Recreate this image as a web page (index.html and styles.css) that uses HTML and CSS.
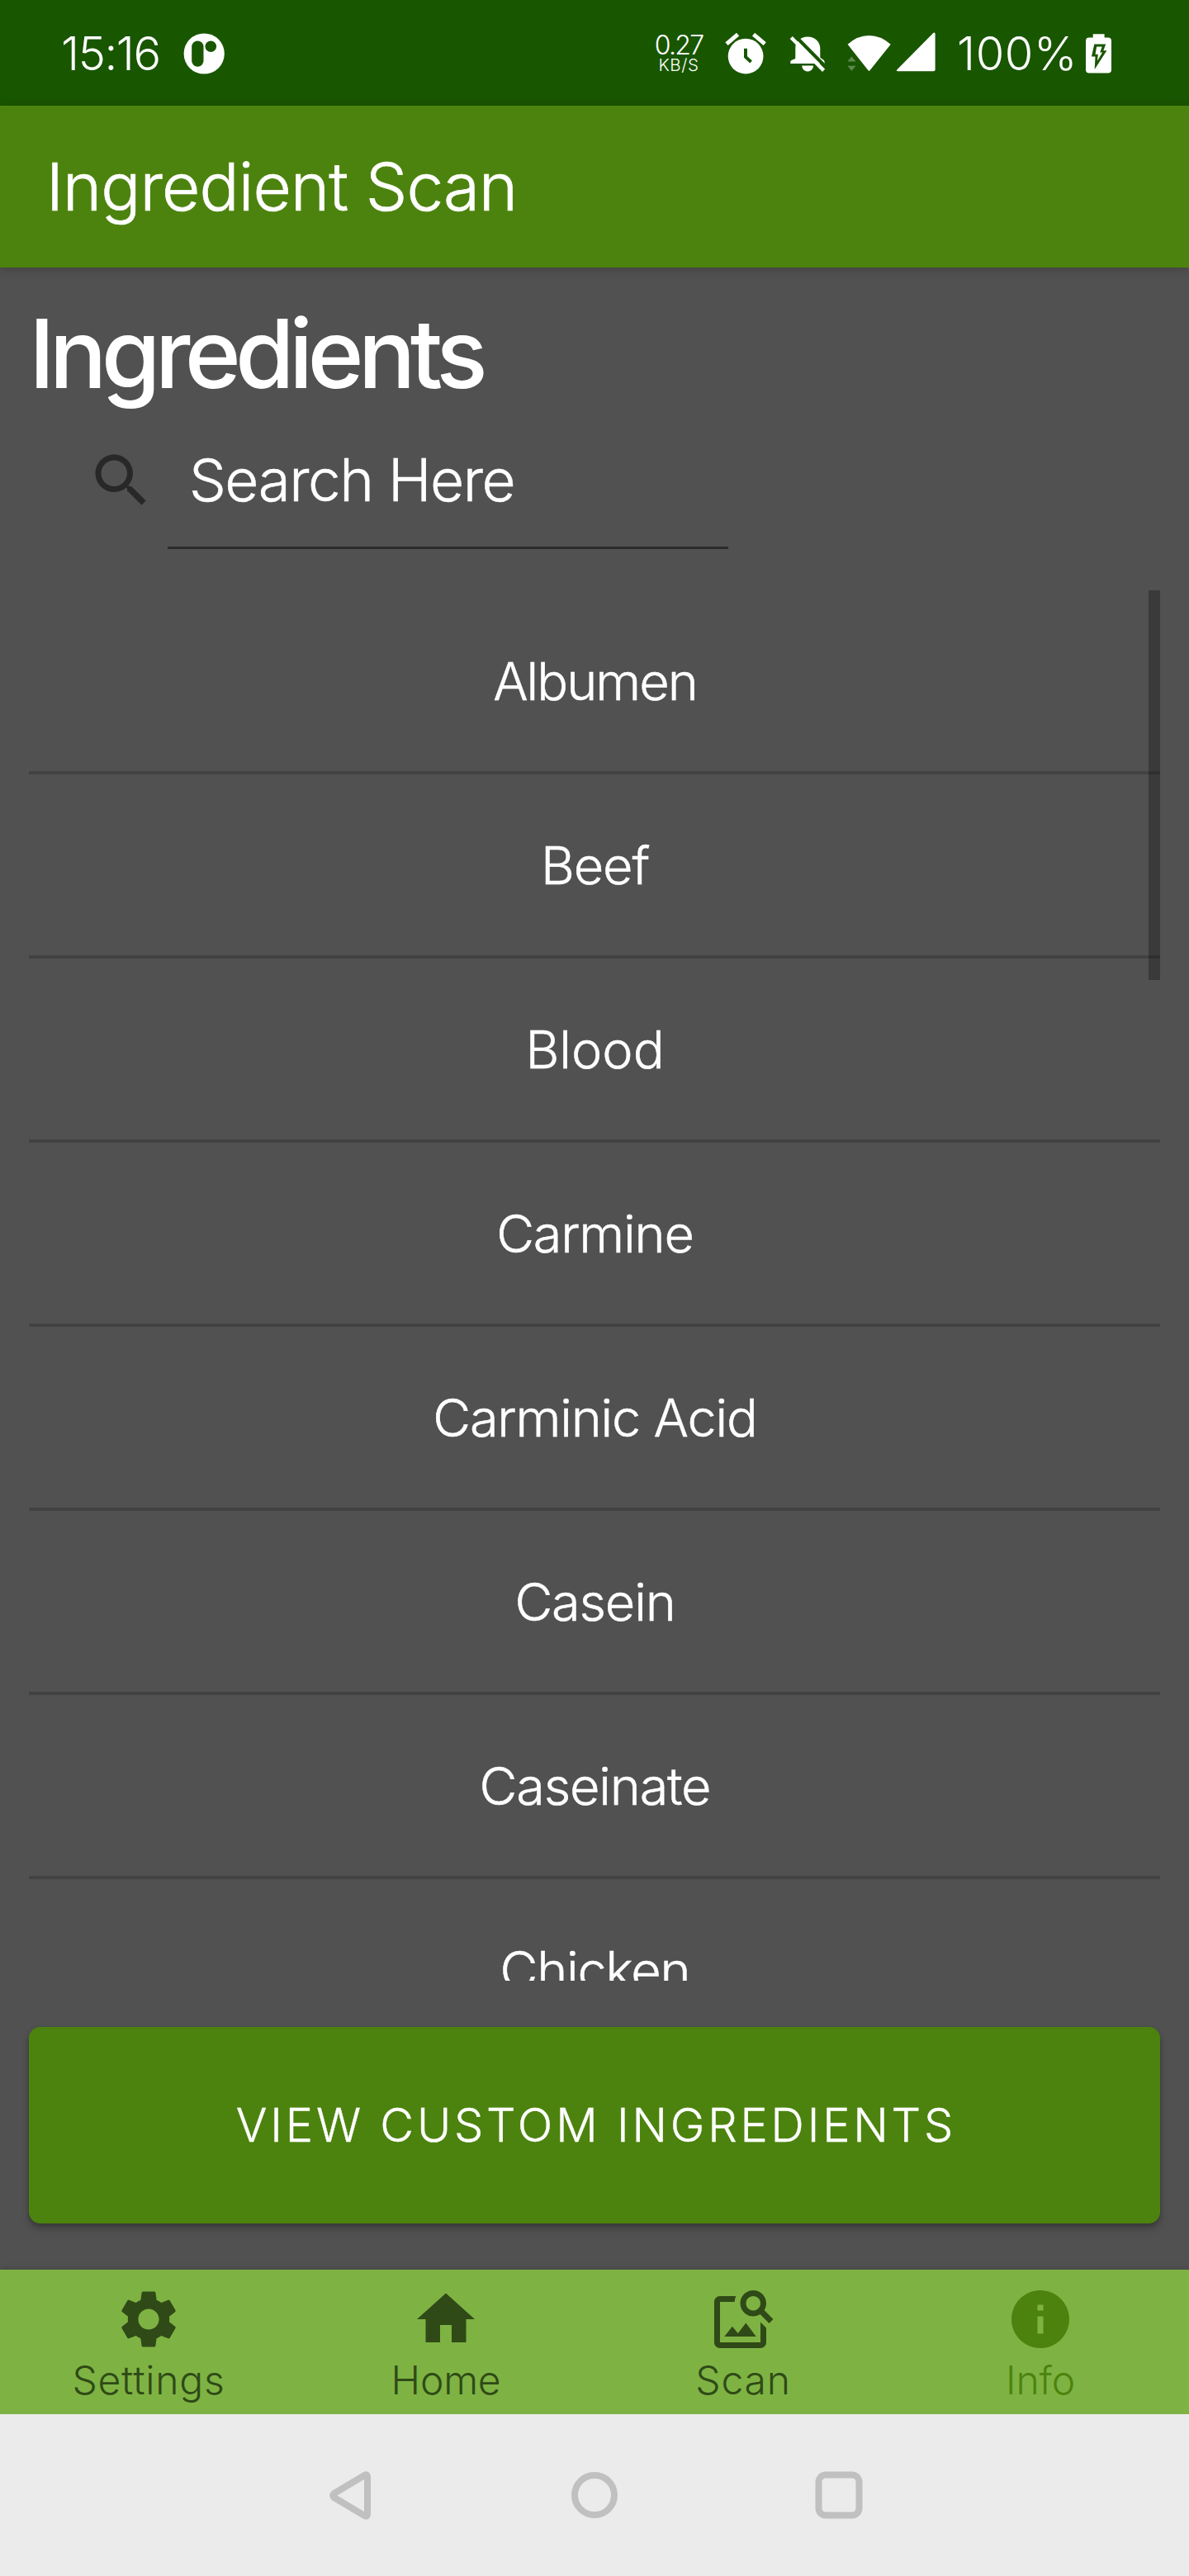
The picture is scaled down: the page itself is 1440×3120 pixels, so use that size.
FILE: index.html
```html
<!DOCTYPE html>
<html lang="en">
<head>
<meta charset="utf-8">
<title>Ingredient Scan</title>
<link rel="stylesheet" href="styles.css">
</head>
<body>
<div class="screen">
  <div class="status-bar">
    <span class="clock">15:16</span>
    <svg class="notif-icon" width="50" height="50" viewBox="222 39.5 50 50">
      <circle cx="247.2" cy="64.5" r="24.6" fill="#fff"/>
      <rect x="232.2" y="49" width="14.3" height="31.3" rx="7.1" fill="#195600"/>
      <circle cx="255.3" cy="55.7" r="6.8" fill="#195600"/>
    </svg>
    <div class="status-right">
      <div class="net-speed"><span class="net-value">0.27</span><span class="net-unit">KB/S</span></div>
      <svg class="alarm-icon" width="52" height="52" viewBox="877 38.5 52 52">
        <circle cx="903.1" cy="67.6" r="21.4" fill="#fff"/>
        <path d="M880 52.6L893.6 41.2M912.6 41.2L926.2 52.6" fill="none" stroke="#fff" stroke-width="5"/>
        <path d="M903 58.2V68.4L909.6 74.4" fill="none" stroke="#195600" stroke-width="4"/>
      </svg>
      <svg class="bell-icon" width="44" height="44" viewBox="956 42.5 44 44">
        <path d="M963.3 71V57C963.3 49.8 970 44 978 44C986.6 44 993.3 50 993.3 58V69C993.3 70 998.6 71.6 998.6 74.5V76.4H957.3V74.5C957.3 71.6 963.3 71.5 963.3 70Z" fill="#fff"/>
        <path d="M971.3 79H985C985 83.5 981.5 86 978.2 86S971.3 83.5 971.3 79Z" fill="#fff"/>
        <path d="M960.5 40.5L1001.5 82" stroke="#195600" stroke-width="4.2"/>
        <path d="M958.3 45L997.6 84.9" stroke="#fff" stroke-width="4.4"/>
      </svg>
      <svg class="wifi-icon" width="54" height="46" viewBox="1026 41.5 54 46">
        <path d="M1026.6 53.3Q1038 42.4 1052.5 42.4T1078.7 53.3L1053.5 84.8Q1052.5 86 1051.5 84.8Z" fill="#fff"/>
        <path d="M1026.3 74L1031.4 68L1036.6 74ZM1026.3 79.3H1036.6L1031.4 85.3Z" fill="#fff" fill-opacity=".3"/>
      </svg>
      <svg class="signal-icon" width="49" height="50" viewBox="1085 38 49 50">
        <path d="M1086.5 84.2L1130.5 39.8Q1132.6 38.6 1132.6 41V84.5Q1132.6 86.3 1130.8 86.3H1087.3Q1084.8 86.3 1086.5 84.2Z" fill="#fff"/>
      </svg>
      <span class="battery-level">100%</span>
      <svg class="battery-icon" width="31" height="48" viewBox="1315 39.8 31 48">
        <path d="M1323.7 40H1337.6V44.3H1342Q1346 44.3 1346 48.3V83.4Q1346 87.4 1342 87.4H1319Q1315 87.4 1315 83.4V48.3Q1315 44.3 1319 44.3H1323.7Z" fill="#fff"/>
        <path d="M1325.3 52.3H1339.2L1336.3 60H1340.4L1325.7 82.7L1326.5 67.3H1322Z" fill="#195600"/>
        <path d="M1328.2 55.3H1334.7L1332.2 62.3H1335.1L1329 72.5L1329.8 64.6H1326.5Z" fill="#fff"/>
      </svg>
    </div>
  </div>

  <header class="app-bar"><span class="app-title">Ingredient Scan</span></header>

  <main class="content">
    <h1 class="heading">Ingredients</h1>
    <div class="search">
      <svg class="search-icon" width="84" height="84" viewBox="0 0 24 24"><path fill="#282828" d="M15.5 14h-.79l-.28-.27C15.41 12.59 16 11.11 16 9.5 16 5.91 13.09 3 9.5 3S3 5.91 3 9.5 5.91 16 9.5 16c1.61 0 3.09-.59 4.23-1.57l.27.28v.79l5 4.99L20.49 19l-4.99-5zm-6 0C7.01 14 5 11.99 5 9.5S7.01 5 9.5 5 14 7.01 14 9.5 11.99 14 9.5 14z"/></svg>
      <div class="search-field">Search Here</div>
    </div>

    <div class="list-wrap">
      <ul class="list">
        <li class="row row-tight">Albumen</li>
        <li class="row">Beef</li>
        <li class="row row-wide">Blood</li>
        <li class="row">Carmine</li>
        <li class="row">Carminic Acid</li>
        <li class="row">Casein</li>
        <li class="row">Caseinate</li>
        <li class="row">Chicken</li>
      </ul>
      <div class="scrollbar"></div>
    </div>

    <div class="primary-button">VIEW CUSTOM INGREDIENTS</div>
  </main>

  <nav class="tabs">
    <div class="tab">
      <svg width="84" height="84" viewBox="0 0 24 24"><path fill="currentColor" d="M19.14 12.94c.04-.3.06-.61.06-.94 0-.32-.02-.64-.07-.94l2.03-1.58c.18-.14.23-.41.12-.61l-1.92-3.32c-.12-.22-.37-.29-.59-.22l-2.39.96c-.5-.38-1.03-.7-1.62-.94l-.36-2.54c-.04-.24-.24-.41-.48-.41h-3.84c-.24 0-.43.17-.47.41l-.36 2.54c-.59.24-1.13.57-1.62.94l-2.39-.96c-.22-.08-.47 0-.59.22L2.74 8.87c-.12.21-.08.47.12.61l2.03 1.58c-.05.3-.09.63-.09.94s.02.64.07.94l-2.03 1.58c-.18.14-.23.41-.12.61l1.92 3.32c.12.22.37.29.59.22l2.39-.96c.5.38 1.03.7 1.62.94l.36 2.54c.05.24.24.41.48.41h3.84c.24 0 .44-.17.47-.41l.36-2.54c.59-.24 1.13-.56 1.62-.94l2.39.96c.22.08.47 0 .59-.22l1.92-3.32c.12-.22.07-.47-.12-.61l-2.01-1.58zM12 15.6c-1.98 0-3.6-1.62-3.6-3.6s1.62-3.6 3.6-3.6 3.6 1.62 3.6 3.6-1.62 3.6-3.6 3.6z"/></svg>
      <span class="tab-label">Settings</span>
    </div>
    <div class="tab">
      <svg width="84" height="84" viewBox="0 0 24 24"><path fill="currentColor" d="M10 20v-6h4v6h5v-8h3L12 3 2 12h3v8z"/></svg>
      <span class="tab-label tab-label-snug">Home</span>
    </div>
    <div class="tab">
      <svg width="84" height="84" viewBox="0 0 24 24"><path fill="currentColor" d="M18 13v7H4V6h5.02c.05-.71.22-1.38.48-2H4c-1.1 0-2 .9-2 2v14c0 1.1.9 2 2 2h14c1.1 0 2-.9 2-2v-5l-2-2zm-1.5 5h-11l2.75-3.53 1.96 2.36 2.75-3.54zm2.8-9.11c.44-.7.7-1.51.7-2.39C20 4.01 17.99 2 15.5 2S11 4.01 11 6.5s2.01 4.5 4.49 4.5c.88 0 1.7-.26 2.39-.7L21 13.42 22.42 12 19.3 8.89zM15.5 9C14.12 9 13 7.88 13 6.5S14.12 4 15.5 4 18 5.12 18 6.5 16.88 9 15.5 9z"/></svg>
      <span class="tab-label">Scan</span>
    </div>
    <div class="tab tab-active">
      <svg width="84" height="84" viewBox="0 0 24 24"><path fill="currentColor" d="M12 2C6.48 2 2 6.48 2 12s4.48 10 10 10 10-4.48 10-10S17.52 2 12 2zm1 15h-2v-6h2v6zm0-8h-2V7h2v2z"/></svg>
      <span class="tab-label tab-label-snug">Info</span>
    </div>
  </nav>

  <div class="system-nav">
    <svg width="60" height="60" viewBox="0 0 60 60"><path d="M51 7.5Q50.5 4 47.5 6L10.3 28.3Q8 30.5 10.3 32.7L47.5 55Q50.5 57 51 53.5Z" fill="none" stroke="#c0c0c0" stroke-width="8" stroke-linejoin="round"/></svg>
    <svg width="60" height="60" viewBox="0 0 60 60"><circle cx="30" cy="30" r="24" fill="none" stroke="#c0c0c0" stroke-width="8"/></svg>
    <svg width="60" height="60" viewBox="0 0 60 60"><rect x="5.5" y="5.5" width="49" height="49" rx="8.5" fill="none" stroke="#c0c0c0" stroke-width="8"/></svg>
  </div>
</div>
</body>
</html>
```
FILE: styles.css
```css
* { box-sizing: border-box; }

body {
  margin: 0;
  background: #515151;
  color: #fff;
  font-family: Inter, "Liberation Sans", sans-serif;
  font-weight: 300;
}

.screen {
  width: 1440px;
  height: 3120px;
  display: flex;
  flex-direction: column;
  overflow: hidden;
}

svg { display: block; flex: none; }

/* status bar */
.status-bar {
  height: 128px;
  flex: none;
  display: flex;
  align-items: center;
  padding: 1px 94px 0 74px;
  background: #195600;
  font-size: 56px;
  line-height: 64px;
  white-space: nowrap;
}
.clock { width: 148px; letter-spacing: -1.4px; }
.status-right {
  margin-left: auto;
  display: flex;
  align-items: center;
}
.net-speed {
  width: 64px;
  display: flex;
  flex-direction: column;
  align-items: center;
  padding-top: 2px;
}
.net-value { font-size: 32px; line-height: 25px; letter-spacing: -1.7px; }
.net-unit { font-size: 20.5px; line-height: 23px; letter-spacing: .6px; }
.alarm-icon { margin-left: 23px; }
.bell-icon { margin-left: 27px; }
.wifi-icon { margin-left: 26px; }
.signal-icon { margin: -3px 0 0 5px; }
.battery-level { width: 157px; padding-left: 25px; letter-spacing: .6px; }
.battery-icon { margin-left: 24px; }

/* app bar */
.app-bar {
  height: 196px;
  flex: none;
  display: flex;
  align-items: center;
  padding-left: 56px;
  background: #4c830e;
  box-shadow: 0 2px 12px rgba(0, 0, 0, .2);
}
.app-title {
  font-size: 80px;
  line-height: 96px;
  letter-spacing: -.9px;
  -webkit-text-stroke: .7px currentColor;
}

/* content */
.content {
  height: 2425px;
  flex: none;
  padding: 34px 35px 0;
}
.heading {
  margin: 0;
  font-size: 116px;
  line-height: 140px;
  font-weight: 500;
  letter-spacing: -6.8px;
}
.search {
  height: 168px;
  display: flex;
  align-items: flex-start;
  padding: 42px 0 0 70px;
}
.search-field {
  width: 679px;
  height: 125px;
  margin-left: 14px;
  padding-left: 26px;
  border-bottom: 3px solid #2b2b2b;
  font-size: 71px;
  line-height: 82px;
  letter-spacing: -1.5px;
  -webkit-text-stroke: .5px currentColor;
}

.list-wrap {
  position: relative;
  height: 1684px;
  margin-top: 49px;
  overflow: hidden;
}
.list { margin: 0; padding: 0; list-style: none; }
.row {
  height: 223px;
  padding-left: 1px;
  border-bottom: 4px solid #424242;
  font-size: 63px;
  line-height: 220px;
  text-align: center;
  letter-spacing: -1.2px;
  -webkit-text-stroke: .5px currentColor;
}
.row-tight { letter-spacing: -2px; }
.row-wide { letter-spacing: 0; }
.scrollbar {
  position: absolute;
  top: 0;
  right: 0;
  width: 14px;
  height: 472px;
  background: rgba(0, 0, 0, .28);
}

.primary-button {
  height: 238px;
  margin-top: 56px;
  padding-left: 4px;
  border-radius: 14px;
  background: #4c830e;
  box-shadow: 0 6px 10px rgba(0, 0, 0, .22), 0 2px 5px rgba(0, 0, 0, .15);
  font-size: 56px;
  line-height: 238px;
  text-align: center;
  letter-spacing: 3.8px;
  -webkit-text-stroke: .4px currentColor;
}

/* tabs */
.tabs {
  height: 175px;
  flex: none;
  display: grid;
  grid-template-columns: repeat(4, 1fr);
  background: #7eb343;
  color: #2f4a17;
  box-shadow: 0 -1px 8px rgba(0, 0, 0, .15);
}
.tab {
  display: flex;
  flex-direction: column;
  align-items: center;
  padding-top: 18px;
}
.tab-active { color: #4c830e; }
.tab-label { margin-top: 4px; font-size: 48px; line-height: 56px; letter-spacing: .8px; }
.tab-label-snug { letter-spacing: -.2px; }

/* system navigation */
.system-nav {
  flex: 1;
  display: flex;
  justify-content: center;
  gap: 236px;
  padding-top: 68px;
  background: #ebebeb;
}
```
